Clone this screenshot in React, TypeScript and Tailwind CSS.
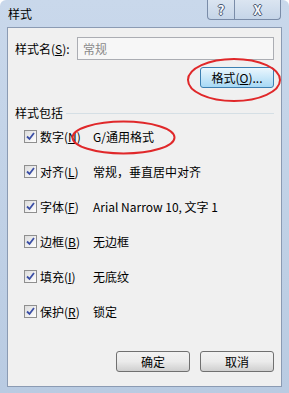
import React from 'react';

const rows = [
  { label: '数字', key: 'N', value: 'G/通用格式' },
  { label: '对齐', key: 'L', value: '常规，垂直居中对齐' },
  { label: '字体', key: 'F', value: 'Arial Narrow 10, 文字 1' },
  { label: '边框', key: 'B', value: '无边框' },
  { label: '填充', key: 'I', value: '无底纹' },
  { label: '保护', key: 'R', value: '锁定' },
];

const font = { fontFamily: '"Noto Sans CJK SC", "Liberation Sans", sans-serif' };

function Check() {
  return (
    <div className="w-[13px] h-[13px] border border-[#8f8f8f] bg-gradient-to-br from-[#dcdcdc] to-white flex items-center justify-center shrink-0">
      <svg width="9" height="9" viewBox="0 0 9 9">
        <path d="M1 4.5 L3.5 7 L8 1" fill="none" stroke="#3b4fa6" strokeWidth="1.8" />
      </svg>
    </div>
  );
}

function Btn({ children, focus }: { children: React.ReactNode; focus?: boolean }) {
  return (
    <div
      className={`w-[74px] h-[21px] rounded-[3px] border flex items-center justify-center text-[12px] text-black ${
        focus
          ? 'border-[#3c7fb1] bg-gradient-to-b from-[#eaf6fd] to-[#a7d9f5]'
          : 'border-[#707070] bg-gradient-to-b from-[#f2f2f2] via-[#ebebeb] to-[#cfcfcf]'
      }`}
    >
      {children}
    </div>
  );
}

export default function App() {
  return (
    <div className="relative w-[289px] h-[393px] overflow-hidden bg-gradient-to-b from-[#c9d8eb] to-[#b9cbe2] rounded-t-[6px]" style={font}>
      {/* title bar */}
      <div className="h-[27px] flex items-start">
        <div className="pl-[8px] pt-[5px] text-[12px] text-black">样式</div>
        <div className="ml-auto mr-[8px] flex">
          <div className="w-[28px] h-[20px] border border-t-0 border-[#7a8ca8] rounded-bl-[4px] bg-gradient-to-b from-[#dbe5f1] to-[#c5d5e8] flex items-center justify-center text-[13px] font-bold text-[#f8f9fc] [text-shadow:1px_0_#4a5a74,-1px_0_#4a5a74,0_1px_#4a5a74,0_-1px_#4a5a74]">?</div>
          <div className="w-[46px] h-[20px] border border-t-0 border-l-0 border-[#7a8ca8] rounded-br-[4px] bg-gradient-to-b from-[#dbe5f1] to-[#c5d5e8] flex items-center justify-center text-[13px] font-bold text-[#f8f9fc] [text-shadow:1px_0_#4a5a74,-1px_0_#4a5a74,0_1px_#4a5a74,0_-1px_#4a5a74]">X</div>
        </div>
      </div>

      {/* client */}
      <div className="mx-[7px] h-[360px] border border-[#8b9bb3] bg-[#f0f0f0] text-[12px] text-black">
        <div className="flex items-center h-[23px] mt-[9px] pl-[7px] pr-[7px]">
          <span className="w-[62px]">样式名(<u>S</u>):</span>
          <div className="flex-1 h-[23px] border border-[#abadb3] bg-[#f7f7f7] flex items-center pl-[5px] text-[#8a8a8a]">常规</div>
        </div>
        <div className="flex justify-end pr-[7px] mt-[7px]">
          <Btn focus>格式(<u>O</u>)...</Btn>
        </div>

        <div className="flex items-center pl-[7px] pr-[7px] mt-[16px]">
          <span>样式包括</span>
          <div className="flex-1 ml-[3px] h-[1px] bg-[#d5dfe5]" />
        </div>

        <div className="flex flex-col -mt-[3px] pl-[16px]">
          {rows.map((r) => (
            <div key={r.key} className="h-[35px] flex items-center">
              <Check />
              <span className="ml-[3px] w-[53px]">
                {r.label}(<u>{r.key}</u>)
              </span>
              <span>{r.value}</span>
            </div>
          ))}
        </div>

        <div className="flex justify-end gap-[10px] pr-[7px] mt-[22px]">
          <Btn>确定</Btn>
          <Btn>取消</Btn>
        </div>
      </div>

      {/* annotations */}
      <svg className="absolute left-0 top-0 pointer-events-none" width="289" height="393">
        <ellipse cx="234" cy="80" rx="46" ry="21" fill="none" stroke="#e0282a" strokeWidth="2" />
        <ellipse cx="123.5" cy="137.5" rx="51" ry="16" fill="none" stroke="#e0282a" strokeWidth="2" />
      </svg>
    </div>
  );
}
